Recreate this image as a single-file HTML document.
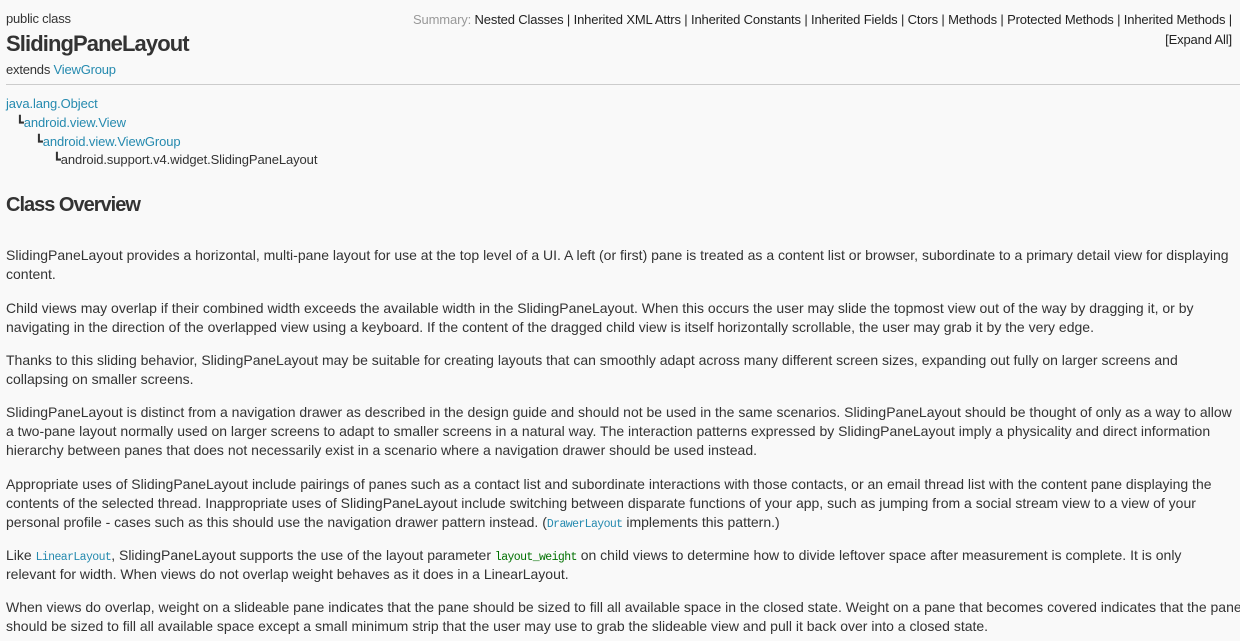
<!DOCTYPE html>
<html><head><meta charset="utf-8"><style>
body{margin:0;background:#f9f9f9;width:1240px;height:641px;overflow:hidden;font-family:"Liberation Sans",Arial,sans-serif;color:#333;}
.a{position:absolute;white-space:nowrap;}
a{color:#258aaf;text-decoration:none}
code{font-family:"Liberation Mono",monospace;font-size:11.5px;letter-spacing:-0.6px;color:#258aaf}
code.g{color:#007000}
.p{position:absolute;left:6px;font-size:14px;line-height:19px;letter-spacing:0px;white-space:nowrap;}
.p div{height:19px}
</style></head><body>
<div class="a" style="left:6px;top:11px;font-size:13px;letter-spacing:-0.2px">public class</div>
<div class="a" style="left:6px;top:31px;font-size:22px;font-weight:bold;letter-spacing:-0.9px">SlidingPaneLayout</div>
<div class="a" style="left:6px;top:62px;font-size:13px;letter-spacing:-0.2px">extends <a>ViewGroup</a></div>
<div class="a" style="right:8px;top:10px;font-size:13px;letter-spacing:-0.15px;text-align:right;line-height:20px;color:#222"><span style="color:#999">Summary:</span> Nested Classes | Inherited XML Attrs | Inherited Constants | Inherited Fields | Ctors | Methods | Protected Methods | Inherited Methods |<br>[Expand All]</div>
<div class="a" style="left:6px;right:0;top:84px;border-top:1px solid #ccc"></div>
<div class="a" style="left:6px;top:96px;font-size:13px;letter-spacing:-0.1px"><a>java.lang.Object</a></div>
<div class="a" style="left:16px;top:115px;font-size:13px;letter-spacing:-0.1px">┗<a>android.view.View</a></div>
<div class="a" style="left:35px;top:134px;font-size:13px;letter-spacing:-0.1px">┗<a>android.view.ViewGroup</a></div>
<div class="a" style="left:53px;top:152px;font-size:13px;letter-spacing:-0.1px">┗android.support.v4.widget.SlidingPaneLayout</div>
<div class="a" style="left:6px;top:194px;font-size:20px;font-weight:bold;letter-spacing:-1px">Class Overview</div>
<div class="p" style="top:246px"><div>SlidingPaneLayout provides a horizontal, multi-pane layout for use at the top level of a UI. A left (or first) pane is treated as a content list or browser, subordinate to a primary detail view for displaying</div><div>content.</div></div>
<div class="p" style="top:299px"><div>Child views may overlap if their combined width exceeds the available width in the SlidingPaneLayout. When this occurs the user may slide the topmost view out of the way by dragging it, or by</div><div>navigating in the direction of the overlapped view using a keyboard. If the content of the dragged child view is itself horizontally scrollable, the user may grab it by the very edge.</div></div>
<div class="p" style="top:351px"><div>Thanks to this sliding behavior, SlidingPaneLayout may be suitable for creating layouts that can smoothly adapt across many different screen sizes, expanding out fully on larger screens and</div><div>collapsing on smaller screens.</div></div>
<div class="p" style="top:403px"><div>SlidingPaneLayout is distinct from a navigation drawer as described in the design guide and should not be used in the same scenarios. SlidingPaneLayout should be thought of only as a way to allow</div><div>a two-pane layout normally used on larger screens to adapt to smaller screens in a natural way. The interaction patterns expressed by SlidingPaneLayout imply a physicality and direct information</div><div>hierarchy between panes that does not necessarily exist in a scenario where a navigation drawer should be used instead.</div></div>
<div class="p" style="top:475px"><div>Appropriate uses of SlidingPaneLayout include pairings of panes such as a contact list and subordinate interactions with those contacts, or an email thread list with the content pane displaying the</div><div>contents of the selected thread. Inappropriate uses of SlidingPaneLayout include switching between disparate functions of your app, such as jumping from a social stream view to a view of your</div><div>personal profile - cases such as this should use the navigation drawer pattern instead. (<code>DrawerLayout</code> implements this pattern.)</div></div>
<div class="p" style="top:546px"><div>Like <code>LinearLayout</code>, SlidingPaneLayout supports the use of the layout parameter <code class="g">layout_weight</code> on child views to determine how to divide leftover space after measurement is complete. It is only</div><div>relevant for width. When views do not overlap weight behaves as it does in a LinearLayout.</div></div>
<div class="p" style="top:598px"><div>When views do overlap, weight on a slideable pane indicates that the pane should be sized to fill all available space in the closed state. Weight on a pane that becomes covered indicates that the pane</div><div>should be sized to fill all available space except a small minimum strip that the user may use to grab the slideable view and pull it back over into a closed state.</div></div>
</body></html>
